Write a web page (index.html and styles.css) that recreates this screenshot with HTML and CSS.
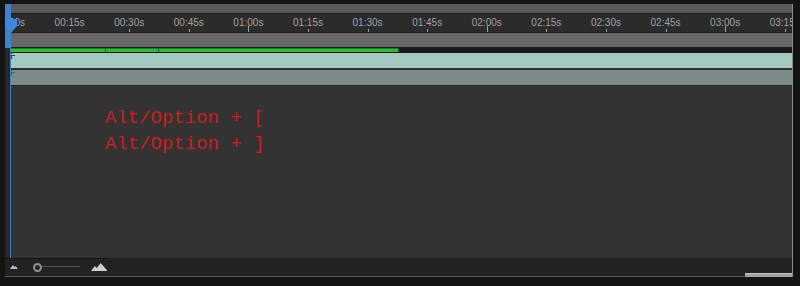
FILE: index.html
```html
<!DOCTYPE html>
<html lang="en">
<head>
    <meta charset="UTF-8">
    <title>Timeline</title>
    <link rel="stylesheet" href="styles.css">
</head>
<body>
    <div class="panel">
        <div class="topbar"></div>
        <div class="ruler">
            <div class="marks">
                <span class="mark major">00:00s</span>
                <span class="mark">00:15s</span>
                <span class="mark">00:30s</span>
                <span class="mark">00:45s</span>
                <span class="mark major">01:00s</span>
                <span class="mark">01:15s</span>
                <span class="mark">01:30s</span>
                <span class="mark">01:45s</span>
                <span class="mark major">02:00s</span>
                <span class="mark">02:15s</span>
                <span class="mark">02:30s</span>
                <span class="mark">02:45s</span>
                <span class="mark major">03:00s</span>
                <span class="mark">03:15s</span>
            </div>
        </div>
        <div class="work-area"></div>
        <div class="tracks">
            <div class="green-track">
                <div class="green-bar">
                    <span class="seg" style="width: 95px"></span>
                    <span class="seg" style="width: 52px"></span>
                    <span class="seg" style="width: 239px"></span>
                </div>
            </div>
            <div class="clip clip-a"><span class="corner"></span></div>
            <div class="clip clip-b"><span class="corner"></span></div>
            <div class="main">
                <p class="hint">Alt/Option + [<br>Alt/Option + ]</p>
            </div>
        </div>
        <div class="bottombar">
            <div class="zoomctl">
                <svg class="mtn-s" width="8" height="4" viewBox="0 0 8 4"><polygon points="0,4 3,0 5,2 6,1 8,4" fill="#bbb"/></svg>
                <span class="knob"></span>
                <span class="slider"></span>
                <svg class="mtn-l" width="17" height="8" viewBox="0 0 17 8"><polygon points="0,8 4,3 6,5 10,0 17,8" fill="#d0d0d0"/></svg>
            </div>
        </div>
        <div class="scrollrow"><span class="thumb"></span></div>

        <div class="playhead">
            <div class="ph-strip"></div>
            <svg class="ph-head" width="12" height="14" viewBox="0 0 12 14"><polygon points="0,0 12,0 12,7 6,14 0,7" fill="#3d8ae0"/></svg>
            <div class="ph-line"></div>
        </div>
    </div>
</body>
</html>
```

FILE: styles.css
```css
body {
    margin: 0;
    background: #141414;
    font-family: "Liberation Sans", Arial, sans-serif;
    height: 286px;
    overflow: hidden;
}
.panel {
    position: relative;
    margin: 4px 0 0 5px;
    width: 787px;
    height: 273px;
    border-right: 1px solid #8a8a8a;
    background: #1c1c1c;
    display: flex;
    flex-direction: column;
    overflow: hidden;
}
.topbar {
    height: 9px;
    background: #5a5a5a;
    border-bottom: 1px solid #1c1c1c;
}
.ruler {
    height: 18px;
    background: #2b2b2b;
    border-bottom: 1px solid #1c1c1c;
    overflow: hidden;
}
.marks {
    display: flex;
    margin-left: -24.8px;
    height: 18px;
}
.mark {
    position: relative;
    flex: 0 0 59.6px;
    text-align: center;
    font-size: 10px;
    line-height: 10px;
    padding-top: 4px;
    color: #a3a3a3;
}
.mark::after {
    content: "";
    position: absolute;
    bottom: 0;
    left: 50%;
    width: 1px;
    height: 3px;
    background: #a0a0a0;
}
.mark.major::after {
    height: 6px;
}
.work-area {
    height: 14px;
    background: #676767;
    border-bottom: 1px solid #1a1a1a;
}
.tracks {
    flex: 1;
    display: flex;
    flex-direction: column;
    padding-left: 5px;
    background: #272727;
}
.green-track {
    height: 4px;
    background: #1a1a1a;
    border-bottom: 1px solid #1a1a1a;
}
.green-bar {
    display: flex;
    height: 4px;
}
.seg {
    background: #2abf2e;
    border-top: 1px solid #1f7a25;
    border-right: 1px solid #1d5a4e;
}
.clip {
    position: relative;
    height: 15px;
}
.clip-a {
    background: #a2c8c0;
    border-top-left-radius: 4px;
    border-bottom: 2px solid #2d2d2d;
}
.clip-b {
    background: #7a8b88;
    border-top-left-radius: 3px;
    border-bottom: 1px solid #262626;
}
.corner {
    position: absolute;
    left: 1px;
    top: 2px;
    width: 3px;
    height: 3px;
    border-left: 1px solid #3a3a3a;
    border-top: 1px solid #3a3a3a;
}
.clip-b .corner {
    border-color: #555;
}
.main {
    flex: 1;
    background: #333333;
    padding: 19px 0 0 95px;
}
.hint {
    margin: 0;
    font-family: "Liberation Mono", "Courier New", monospace;
    font-size: 19px;
    line-height: 26px;
    color: #cc1f1f;
}
.bottombar {
    height: 15px;
    background: #222222;
}
.zoomctl {
    width: 102px;
    height: 14px;
    border-top: 1px solid #121212;
    display: flex;
    align-items: center;
}
.mtn-s {
    margin-left: 5px;
    margin-top: 2px;
}
.knob {
    margin-left: 15px;
    width: 5px;
    height: 5px;
    border: 2px solid #8e8e8e;
    border-radius: 50%;
    margin-top: 3px;
}
.slider {
    width: 39px;
    height: 1px;
    background: #555;
    margin-top: 1px;
}
.mtn-l {
    margin-left: 11px;
    margin-top: 2px;
}
.scrollrow {
    height: 4px;
    background: #222222;
    display: flex;
    box-shadow: inset 0 -1px 0 #5c5c5c;
}
.thumb {
    margin-left: auto;
    width: 47px;
    height: 4px;
    background: #a3a3a3;
    border-top: 1px solid #c4c4c4;
    box-sizing: border-box;
}
.playhead {
    position: absolute;
    left: 0;
    top: 0;
    width: 14px;
    height: 254px;
}
.ph-strip {
    position: absolute;
    left: 0;
    top: 0;
    width: 5px;
    height: 44px;
    background: #3b82d4;
}
.ph-head {
    position: absolute;
    left: 0;
    top: 15px;
}
.ph-line {
    position: absolute;
    left: 5px;
    top: 0;
    width: 1px;
    height: 254px;
    background: #3f82cc;
}
```
